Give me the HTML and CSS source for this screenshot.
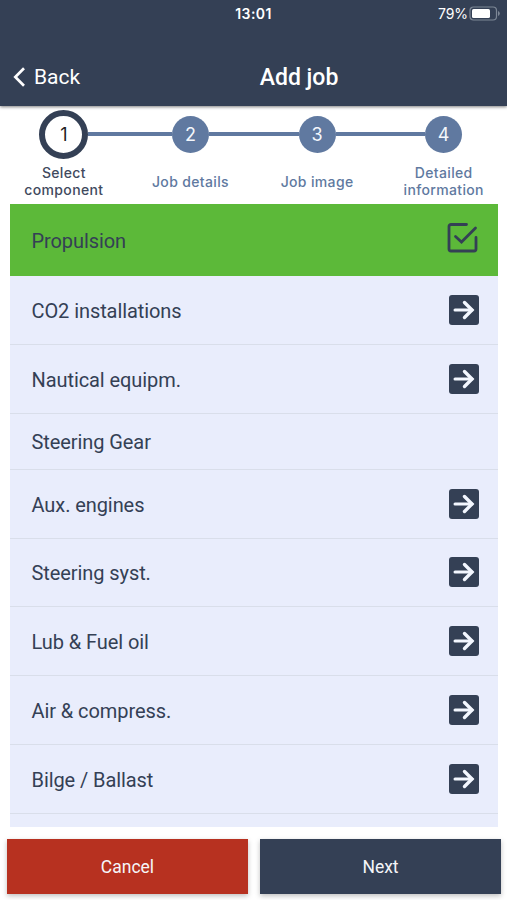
FILE: index.html
```html
<!DOCTYPE html>
<html lang="en">
<head>
<meta charset="utf-8">
<title>Add job</title>
<link rel="stylesheet" href="styles.css">
</head>
<body>
<svg class="defs" width="0" height="0">
  <symbol id="arrow" viewBox="0 0 30 30">
    <rect width="30" height="30" rx="3" fill="#344055"/>
    <path d="M6 15H23" fill="none" stroke="#f3f7ff" stroke-width="3" stroke-linecap="round"/>
    <path d="M15.500 7.500L23 15L15.500 22.500" fill="none" stroke="#f3f7ff" stroke-width="3.400" stroke-linecap="round"/>
  </symbol>
</svg>
<div class="app">
  <header class="header">
    <div class="status">
      <span></span>
      <span class="time">13:01</span>
      <span class="battery"><span class="percent">79%</span>
        <svg width="31" height="15" viewBox="0 0 31 15"><rect x="1" y="1" width="26.5" height="13" rx="3.5" fill="none" stroke="#7d8796" stroke-width="1.2"/><rect x="3" y="3" width="18" height="9" rx="1.6" fill="#fff"/><path d="M29 5v5q1.8-.8 1.8-2.5T29 5z" fill="#7d8796"/></svg>
      </span>
    </div>
    <div class="nav">
      <a class="back"><svg width="13" height="20" viewBox="0 0 13 20"><path d="M11 1.3L2.3 10L11 18.7" fill="none" stroke="#fff" stroke-width="2.7"/></svg><span>Back</span></a>
      <h1>Add job</h1>
    </div>
  </header>
  <ol class="stepper">
    <li class="step current"><div class="track"><span class="dot">1</span></div><div class="label">Select<br>component</div></li>
    <li class="step"><div class="track"><span class="dot">2</span></div><div class="label">Job details</div></li>
    <li class="step"><div class="track"><span class="dot">3</span></div><div class="label">Job image</div></li>
    <li class="step"><div class="track"><span class="dot">4</span></div><div class="label">Detailed<br>information</div></li>
  </ol>
  <ul class="list">
    <li class="row selected"><span>Propulsion</span><svg class="check" width="32" height="32" viewBox="0 0 32 32"><path d="M19.5 2.500H4a2 2 0 0 0-2 2V27a2 2 0 0 0 2 2H27a2 2 0 0 0 2-2V15.500M8.500 14.500L14.500 20L28.500 6" fill="none" stroke="#344055" stroke-width="2.800" stroke-linecap="round"/></svg></li>
    <li class="row"><span>CO2 installations</span><svg class="icon"><use href="#arrow"/></svg></li>
    <li class="row"><span>Nautical equipm.</span><svg class="icon"><use href="#arrow"/></svg></li>
    <li class="row short"><span>Steering Gear</span></li>
    <li class="row"><span>Aux. engines</span><svg class="icon"><use href="#arrow"/></svg></li>
    <li class="row"><span>Steering syst.</span><svg class="icon"><use href="#arrow"/></svg></li>
    <li class="row"><span>Lub &amp; Fuel oil</span><svg class="icon"><use href="#arrow"/></svg></li>
    <li class="row"><span>Air &amp; compress.</span><svg class="icon"><use href="#arrow"/></svg></li>
    <li class="row"><span>Bilge / Ballast</span><svg class="icon"><use href="#arrow"/></svg></li>
  </ul>
  <footer class="actions">
    <button class="cancel">Cancel</button>
    <button class="next">Next</button>
  </footer>
</div>
</body>
</html>
```

FILE: styles.css
```css
* { box-sizing: border-box; }
body { margin: 0; background: #fff; font-family: Roboto, sans-serif; color: #344055; }
ol, ul { list-style: none; margin: 0; padding: 0; }
.defs { position: absolute; }
.app { width: 507px; height: 900px; overflow: hidden; display: flex; flex-direction: column; }

.header { height: 106px; flex: none; background: #344055; color: #fff; box-shadow: 0 1px 3px rgba(0, 0, 0, .5); }
.status { display: grid; grid-template-columns: 1fr auto 1fr; align-items: center; height: 27px; padding: 0 7px 0; font: 500 14px/18px Inter, sans-serif; }
.time { font-weight: 600; letter-spacing: .4px; }
.battery { display: flex; justify-content: flex-end; align-items: center; gap: 1px; }
.percent { font-weight: 400; letter-spacing: -.1px; }
.nav { display: grid; grid-template-columns: 1fr auto 1fr; align-items: center; height: 79px; padding: 20px 0 0 13px; }
.nav h1 { margin: 0; font-size: 23px; font-weight: 500; line-height: 28px; padding: 2px 0 0 78px; }
.back { display: flex; align-items: center; gap: 8px; font-size: 21px; line-height: 28px; }

.stepper { display: grid; grid-template-columns: repeat(4, 126.6px); flex: none; height: 98px; padding: 3px 0 0 .6px; }
.step { display: flex; flex-direction: column; color: #6079a0; }
.track { display: grid; grid-template-columns: 1fr auto 1fr; align-items: center; height: 50px; }
.track::before, .track::after { content: ""; height: 3.5px; background: #6079a0; }
.step:first-child .track::before, .step:last-child .track::after { background: none; }
.dot { width: 37px; height: 37px; border-radius: 50%; background: #6079a0; color: #f4f7fc; display: grid; place-items: center; font: 18px Inter, sans-serif; }
.current .dot { width: 49px; height: 49px; background: #fff; border: 6px solid #344055; color: #222; }
.label { height: 44px; display: grid; place-content: center; text-align: center; font: 500 14px/17px Inter, sans-serif; letter-spacing: .35px; }
.current .label { color: #414a5e; }

.list { height: 622.500px; flex: none; margin: 0 9px 0 9.500px; background: #e9edfc; overflow: hidden; }
.row { display: flex; align-items: center; justify-content: space-between; height: 68.800px; padding: 0 19px 0 22px; border-bottom: 1px solid #d9deea; font-size: 20px; letter-spacing: -.08px; }
.row > span { padding-top: 2px; }
.row.selected { height: 72px; background: #5cb939; border: 0; }
.row.short { height: 56.200px; }
.icon { width: 30px; height: 30px; }
.check { margin-top: -4px; }

.actions { display: grid; grid-template-columns: 1fr 1fr; gap: 12px; margin: 12px 6px 6.500px 7px; flex: 1; }
.actions button { border: 0; padding: 2px 0 0; color: #f5f6f9; font: 17.500px Roboto, sans-serif; box-shadow: 0 2px 5px rgba(0, 0, 0, .25); }
.cancel { background: #b73120; }
.next { background: #344055; }
```
